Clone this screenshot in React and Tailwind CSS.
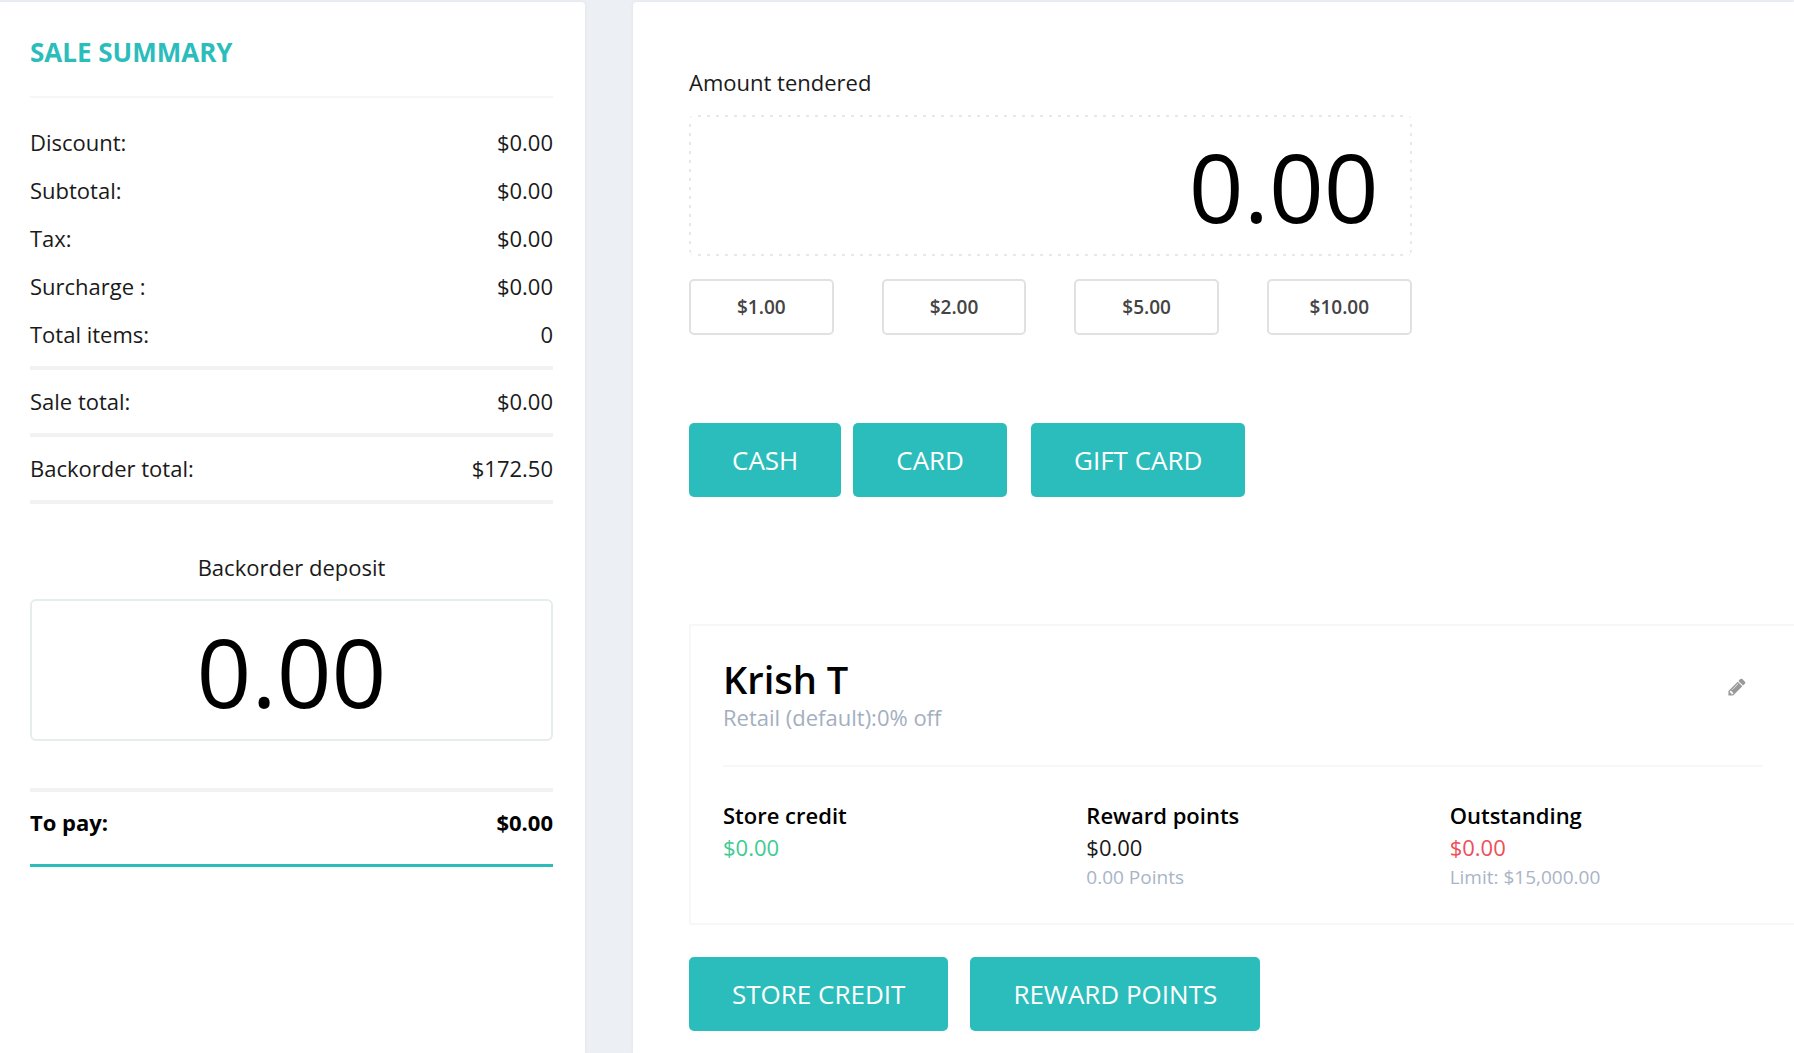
const summaryRows = [
  ["Discount:", "$0.00"],
  ["Subtotal:", "$0.00"],
  ["Tax:", "$0.00"],
  ["Surcharge :", "$0.00"],
  ["Total items:", "0"],
];

const totals = [
  ["Sale total:", "$0.00"],
  ["Backorder total:", "$172.50"],
];

const quickAmounts = ["$1.00", "$2.00", "$5.00", "$10.00"];

function PayButton({ children }) {
  return (
    <button
      type="button"
      className="h-[74px] rounded-[5px] bg-[#2bbdbb] px-[43px] text-[26px] font-medium whitespace-nowrap text-white"
    >
      {children}
    </button>
  );
}

function Row({ label, value }) {
  return (
    <div className="flex h-12 items-center justify-between">
      <dt>{label}</dt>
      <dd>{value}</dd>
    </div>
  );
}

function PencilIcon() {
  return (
    <svg viewBox="0 0 1792 1792" className="size-5 fill-[#999999]" aria-hidden="true">
      <path d="M491 1536l91-91-235-235-91 91v107h128v128h107zM1014 608q0-22-22-22-10 0-17 7l-542 542q-7 7-7 17 0 22 22 22 10 0 17-7l542-542q7-7 7-17zM960 416l416 416-832 832h-416v-416zM1643 512q0 53-37 90l-166 166-416-416 166-165q36-38 90-38 53 0 91 38l235 234q37 39 37 91z" />
    </svg>
  );
}

function SaleSummary() {
  return (
    <aside className="rounded-tr-[4px] bg-white pr-8 pl-[30px] shadow-[0_0_4px_rgba(0,0,0,0.06)]">
      <h1 className="flex h-24 items-center border-b-2 border-[#f5f6f7] pt-[6px] text-[26px] font-bold text-[#2bbdbb]">
        SALE SUMMARY
      </h1>
      <dl className="pt-5">
        {summaryRows.map(([label, value]) => (
          <Row key={label} label={label} value={value} />
        ))}
      </dl>
      <dl className="mt-2 border-t-4 border-[#f1f2f2]">
        {totals.map(([label, value]) => (
          <div key={label} className="border-b-4 border-[#f1f2f2] pt-[7px] pb-2">
            <Row label={label} value={value} />
          </div>
        ))}
      </dl>
      <label htmlFor="deposit" className="mt-[47px] block text-center leading-8">
        Backorder deposit
      </label>
      <input
        id="deposit"
        type="text"
        defaultValue="0.00"
        className="mt-4 block h-[142px] w-full rounded-[6px] border-2 border-[#e6edeb] bg-white px-8 text-center text-8xl text-black"
      />
      <dl className="mt-[47px] border-t-4 border-b-[3px] border-t-[#f1f2f2] border-b-[#2bbdbb] pt-[6px] pb-[18px] font-bold text-black">
        <Row label="To pay:" value="$0.00" />
      </dl>
    </aside>
  );
}

function CustomerCard() {
  return (
    <section className="mt-[127px] border-y-2 border-l-2 border-[#f6f7f7] pr-[31px] pb-8 pl-8">
      <div className="flex items-center justify-between border-b-2 border-[#f6f7f7] pt-[29px] pr-4 pb-[34px]">
        <div>
          <h2 className="text-[38px] leading-[48px] font-semibold text-black">Krish T</h2>
          <p className="leading-7 text-[#a3afc0]">Retail (default):0% off</p>
        </div>
        <button type="button" aria-label="Edit customer" className="mb-3">
          <PencilIcon />
        </button>
      </div>
      <div className="grid grid-cols-3 gap-[50px] pt-8 leading-8">
        <div>
          <h3 className="font-semibold text-black">Store credit</h3>
          <p className="text-[#3ecb92]">$0.00</p>
        </div>
        <div>
          <h3 className="font-semibold text-black">Reward points</h3>
          <p>$0.00</p>
          <p className="text-[19px] leading-7 text-[#a9b4c6]">0.00 Points</p>
        </div>
        <div>
          <h3 className="font-semibold text-black">Outstanding</h3>
          <p className="text-[#ee4e5b]">$0.00</p>
          <p className="text-[19px] leading-7 text-[#a9b4c6]">Limit: $15,000.00</p>
        </div>
      </div>
    </section>
  );
}

export default function App() {
  return (
    <div className="grid min-h-screen grid-cols-[585fr_1161fr] gap-12 bg-[#ecf0f5] pt-[2px] font-['Open_Sans',sans-serif] text-[22px] text-[#1a1a1a]">
      <SaleSummary />
      <main className="rounded-tl-[4px] bg-white pb-5 pl-14 shadow-[0_0_4px_rgba(0,0,0,0.06)]">
        <div className="w-[65.4%] pt-16">
          <label htmlFor="tendered" className="block leading-8">
            Amount tendered
          </label>
          <input
            id="tendered"
            type="text"
            defaultValue="0.00"
            className="mt-[17px] block h-[141px] w-full rounded-[6px] bg-[image:repeating-linear-gradient(90deg,#e2ebe9_0_3px,transparent_3px_9px),repeating-linear-gradient(90deg,#e2ebe9_0_3px,transparent_3px_9px),repeating-linear-gradient(180deg,#e2ebe9_0_3px,transparent_3px_9px),repeating-linear-gradient(180deg,#e2ebe9_0_3px,transparent_3px_9px)] bg-[size:100%_2px,100%_2px,2px_100%,2px_100%] bg-[position:top,bottom,left,right] bg-no-repeat px-[33px] text-right text-8xl text-black"
          />
          <div className="mt-[23px] grid grid-cols-4 gap-12">
            {quickAmounts.map((amount) => (
              <button
                key={amount}
                type="button"
                className="h-14 rounded-[5px] border-2 border-[#e1e1e1] bg-white text-[19px] font-semibold text-[#444444]"
              >
                {amount}
              </button>
            ))}
          </div>
        </div>
        <div className="mt-[88px] flex">
          <div className="mr-6 flex gap-3">
            <PayButton>CASH</PayButton>
            <PayButton>CARD</PayButton>
          </div>
          <PayButton>GIFT CARD</PayButton>
        </div>
        <CustomerCard />
        <div className="mt-8 flex gap-[22px]">
          <PayButton>STORE CREDIT</PayButton>
          <PayButton>REWARD POINTS</PayButton>
        </div>
      </main>
    </div>
  );
}
